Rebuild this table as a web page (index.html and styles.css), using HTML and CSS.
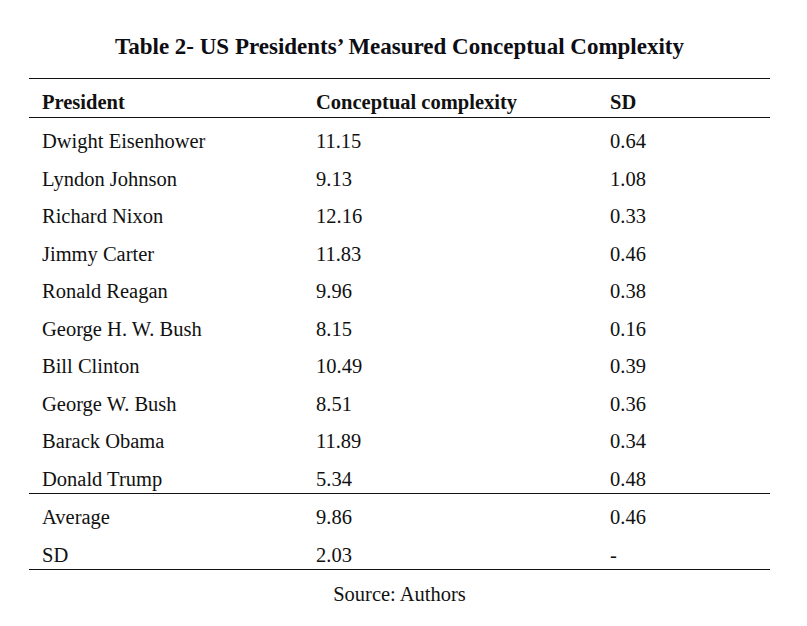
FILE: index.html
```html
<!DOCTYPE html>
<html lang="en">
<head>
<meta charset="utf-8">
<title>Table 2- US Presidents’ Measured Conceptual Complexity</title>
<link rel="stylesheet" href="styles.css">
</head>
<body>
<div class="page">
  <h1 class="title">Table 2- US Presidents’ Measured Conceptual Complexity</h1>
  <table class="data">
    <colgroup>
      <col class="c1"><col class="c2"><col class="c3">
    </colgroup>
    <thead>
      <tr><th>President</th><th>Conceptual complexity</th><th>SD</th></tr>
    </thead>
    <tbody>
      <tr><td>Dwight Eisenhower</td><td>11.15</td><td>0.64</td></tr>
      <tr><td>Lyndon Johnson</td><td>9.13</td><td>1.08</td></tr>
      <tr><td>Richard Nixon</td><td>12.16</td><td>0.33</td></tr>
      <tr><td>Jimmy Carter</td><td>11.83</td><td>0.46</td></tr>
      <tr><td>Ronald Reagan</td><td>9.96</td><td>0.38</td></tr>
      <tr><td>George H. W. Bush</td><td>8.15</td><td>0.16</td></tr>
      <tr><td>Bill Clinton</td><td>10.49</td><td>0.39</td></tr>
      <tr><td>George W. Bush</td><td>8.51</td><td>0.36</td></tr>
      <tr><td>Barack Obama</td><td>11.89</td><td>0.34</td></tr>
      <tr><td>Donald Trump</td><td>5.34</td><td>0.48</td></tr>
    </tbody>
    <tbody class="summary">
      <tr><td>Average</td><td>9.86</td><td>0.46</td></tr>
      <tr><td>SD</td><td>2.03</td><td>-</td></tr>
    </tbody>
  </table>
  <p class="source">Source: Authors</p>
</div>
</body>
</html>
```

FILE: styles.css
```css
html, body {
  margin: 0;
  padding: 0;
  background: #ffffff;
}

body {
  font-family: "Liberation Serif", "Times New Roman", serif;
  color: #111111;
}

.page {
  width: 741px;
  margin-left: 29px;
}

.title {
  margin: 33px 0 17px;
  font-size: 23px;
  line-height: 28px;
  font-weight: bold;
  text-align: center;
  color: #0d0d14;
}

.data {
  width: 741px;
  border-collapse: collapse;
  table-layout: fixed;
  font-size: 20.5px;
  line-height: 24px;
  border-top: 1px solid #111;
  border-bottom: 1px solid #111;
}

.c1 { width: 287px; }
.c2 { width: 294px; }
.c3 { width: 160px; }

.data th,
.data td {
  text-align: left;
  padding: 11px 0 2.5px 0;
  white-space: nowrap;
}

.data th {
  font-weight: bold;
  padding-bottom: 3px;
  border-bottom: 1px solid #111;
}

.data th:first-child,
.data td:first-child {
  padding-left: 13px;
}

.summary tr:first-child td {
  border-top: 1px solid #111;
}

.source {
  margin: 12px 0 0;
  font-size: 20.5px;
  line-height: 24px;
  text-align: center;
}
```
